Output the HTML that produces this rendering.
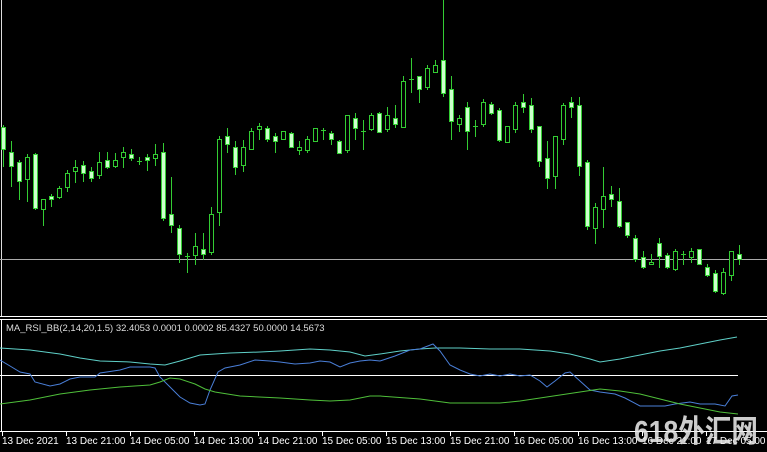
<!DOCTYPE html>
<html><head><meta charset="utf-8"><style>
html,body{margin:0;padding:0;background:#000;width:767px;height:452px;overflow:hidden}
svg{display:block}
.w line{stroke:#3c3;stroke-width:1}
.h{fill:#000;stroke:#3c3;stroke-width:1}
.f{fill:#ccffcc;stroke:#3c3;stroke-width:1}
.lbl{font-family:"Liberation Sans",sans-serif;font-size:10px;fill:#fff}
</style></head><body>
<svg width="767" height="452" viewBox="0 0 767 452" xmlns="http://www.w3.org/2000/svg">
<rect width="767" height="452" fill="#000"/>
<line x1="1.5" y1="0" x2="1.5" y2="316" stroke="#ddd"/>
<line x1="0" y1="259.5" x2="767" y2="259.5" stroke="#aaa"/>
<line x1="0" y1="316.5" x2="767" y2="316.5" stroke="#fff"/>
<line x1="0" y1="319.5" x2="767" y2="319.5" stroke="#fff"/>
<line x1="1.5" y1="320" x2="1.5" y2="432" stroke="#fff"/>
<line x1="0" y1="431.5" x2="767" y2="431.5" stroke="#fff"/>
<g stroke="#fff">
<line x1="2.5" y1="431" x2="2.5" y2="436"/><line x1="66.5" y1="431" x2="66.5" y2="436"/><line x1="130.5" y1="431" x2="130.5" y2="436"/><line x1="194.5" y1="431" x2="194.5" y2="436"/><line x1="258.5" y1="431" x2="258.5" y2="436"/><line x1="322.5" y1="431" x2="322.5" y2="436"/><line x1="386.5" y1="431" x2="386.5" y2="436"/><line x1="450.5" y1="431" x2="450.5" y2="436"/><line x1="514.5" y1="431" x2="514.5" y2="436"/><line x1="578.5" y1="431" x2="578.5" y2="436"/><line x1="642.5" y1="431" x2="642.5" y2="436"/><line x1="706.5" y1="431" x2="706.5" y2="436"/>
</g>
<g class="lbl">
<text x="2" y="444">13 Dec 2021</text><text x="66" y="444">13 Dec 21:00</text><text x="130" y="444">14 Dec 05:00</text><text x="194" y="444">14 Dec 13:00</text><text x="258" y="444">14 Dec 21:00</text><text x="322" y="444">15 Dec 05:00</text><text x="386" y="444">15 Dec 13:00</text><text x="450" y="444">15 Dec 21:00</text><text x="514" y="444">16 Dec 05:00</text><text x="578" y="444">16 Dec 13:00</text><text x="642" y="444">16 Dec 21:00</text><text x="706" y="444">17 Dec 05:00</text>
</g>
<text x="6" y="331" font-family="Liberation Sans,sans-serif" font-size="9.5px" fill="#ddd">MA_RSI_BB(2,14,20,1.5) 32.4053 0.0001 0.0002 85.4327 50.0000 14.5673</text>
<line x1="0" y1="375.5" x2="738" y2="375.5" stroke="#fff"/>
<polyline fill="none" stroke="#5fd0c8" points="0,348 30,350 60,354 80,358 100,361 130,362 150,364 165,365 180,361 200,355 230,353 260,352 280,351 310,349 330,350 350,352 365,356 380,354 400,351 420,349 435,348 460,348 490,349 520,349 550,351 570,354 590,359 600,362 620,359 640,355 660,351 680,348 700,344 720,340 737,337"/>
<polyline fill="none" stroke="#4a7fd8" points="0,360 10,366 20,372 30,374 35,382 50,386 60,384 70,379 80,377 95,377 100,373 120,370 130,367 150,367 155,368 160,377 170,387 180,397 190,403 200,405 205,404 210,390 218,372 225,368 240,365 255,360 270,361 280,362 295,364 310,363 320,361 330,362 340,367 350,363 360,361 370,360 380,361 395,356 410,350 420,349 433,344 440,351 450,365 460,370 470,374 480,376 490,374 500,376 510,374 520,376 530,375 540,381 547,387 555,381 565,373 570,372 580,381 590,390 600,392 615,394 625,398 640,406 660,406 665,406 675,404 690,402 700,404 715,404 725,406 732,396 738,395"/>
<polyline fill="none" stroke="#4fbf3a" points="0,404 30,400 60,394 90,390 120,387 150,385 160,382 170,378 180,379 195,384 205,389 215,392 240,396 280,398 310,400 330,401 350,400 360,398 370,396 380,396 420,399 450,403 470,403 500,403 520,401 540,398 560,395 580,392 600,389 620,391 640,394 660,399 680,404 700,408 720,412 738,414"/>
<g class="w" shape-rendering="crispEdges">
<line x1="3.5" y1="125" x2="3.5" y2="167"/><line x1="11.5" y1="141" x2="11.5" y2="187"/><line x1="19.5" y1="160" x2="19.5" y2="200"/><line x1="27.5" y1="154" x2="27.5" y2="202"/><line x1="35.5" y1="153" x2="35.5" y2="210"/><line x1="43.5" y1="199" x2="43.5" y2="226"/><line x1="51.5" y1="194" x2="51.5" y2="207"/><line x1="59.5" y1="186" x2="59.5" y2="199"/><line x1="67.5" y1="170" x2="67.5" y2="192"/><line x1="75.5" y1="160" x2="75.5" y2="183"/><line x1="83.5" y1="161" x2="83.5" y2="182"/><line x1="91.5" y1="167" x2="91.5" y2="182"/><line x1="99.5" y1="152" x2="99.5" y2="179"/><line x1="107.5" y1="152" x2="107.5" y2="169"/><line x1="115.5" y1="153" x2="115.5" y2="168"/><line x1="123.5" y1="147" x2="123.5" y2="168"/><line x1="131.5" y1="149" x2="131.5" y2="161"/><line x1="139.5" y1="157" x2="139.5" y2="165"/><line x1="147.5" y1="154" x2="147.5" y2="171"/><line x1="155.5" y1="144" x2="155.5" y2="166"/><line x1="163.5" y1="143" x2="163.5" y2="221"/><line x1="171.5" y1="177" x2="171.5" y2="233"/><line x1="179.5" y1="225" x2="179.5" y2="263"/><line x1="187.5" y1="253" x2="187.5" y2="273"/><line x1="195.5" y1="233" x2="195.5" y2="265"/><line x1="203.5" y1="233" x2="203.5" y2="260"/><line x1="211.5" y1="207" x2="211.5" y2="255"/><line x1="219.5" y1="136" x2="219.5" y2="226"/><line x1="227.5" y1="128" x2="227.5" y2="153"/><line x1="235.5" y1="141" x2="235.5" y2="175"/><line x1="243.5" y1="140" x2="243.5" y2="172"/><line x1="251.5" y1="128" x2="251.5" y2="150"/><line x1="259.5" y1="123" x2="259.5" y2="140"/><line x1="267.5" y1="126" x2="267.5" y2="142"/><line x1="275.5" y1="133" x2="275.5" y2="153"/><line x1="283.5" y1="131" x2="283.5" y2="140"/><line x1="291.5" y1="132" x2="291.5" y2="148"/><line x1="299.5" y1="141" x2="299.5" y2="155"/><line x1="307.5" y1="136" x2="307.5" y2="153"/><line x1="315.5" y1="128" x2="315.5" y2="142"/><line x1="323.5" y1="128" x2="323.5" y2="140"/><line x1="331.5" y1="131" x2="331.5" y2="145"/><line x1="339.5" y1="140" x2="339.5" y2="154"/><line x1="347.5" y1="115" x2="347.5" y2="153"/><line x1="355.5" y1="113" x2="355.5" y2="140"/><line x1="363.5" y1="120" x2="363.5" y2="150"/><line x1="371.5" y1="113" x2="371.5" y2="131"/><line x1="379.5" y1="112" x2="379.5" y2="133"/><line x1="387.5" y1="107" x2="387.5" y2="132"/><line x1="395.5" y1="105" x2="395.5" y2="128"/><line x1="403.5" y1="76" x2="403.5" y2="127"/><line x1="411.5" y1="58" x2="411.5" y2="93"/><line x1="419.5" y1="76" x2="419.5" y2="103"/><line x1="427.5" y1="65" x2="427.5" y2="90"/><line x1="435.5" y1="60" x2="435.5" y2="72"/><line x1="443.5" y1="0" x2="443.5" y2="97"/><line x1="451.5" y1="76" x2="451.5" y2="140"/><line x1="459.5" y1="115" x2="459.5" y2="132"/><line x1="467.5" y1="102" x2="467.5" y2="150"/><line x1="475.5" y1="120" x2="475.5" y2="137"/><line x1="483.5" y1="99" x2="483.5" y2="127"/><line x1="491.5" y1="102" x2="491.5" y2="115"/><line x1="499.5" y1="108" x2="499.5" y2="142"/><line x1="507.5" y1="126" x2="507.5" y2="142"/><line x1="515.5" y1="102" x2="515.5" y2="133"/><line x1="523.5" y1="94" x2="523.5" y2="113"/><line x1="531.5" y1="98" x2="531.5" y2="133"/><line x1="539.5" y1="126" x2="539.5" y2="167"/><line x1="547.5" y1="141" x2="547.5" y2="189"/><line x1="555.5" y1="136" x2="555.5" y2="189"/><line x1="563.5" y1="103" x2="563.5" y2="145"/><line x1="571.5" y1="97" x2="571.5" y2="118"/><line x1="579.5" y1="97" x2="579.5" y2="176"/><line x1="587.5" y1="160" x2="587.5" y2="230"/><line x1="595.5" y1="203" x2="595.5" y2="244"/><line x1="603.5" y1="167" x2="603.5" y2="228"/><line x1="611.5" y1="186" x2="611.5" y2="207"/><line x1="619.5" y1="188" x2="619.5" y2="228"/><line x1="627.5" y1="222" x2="627.5" y2="238"/><line x1="635.5" y1="235" x2="635.5" y2="262"/><line x1="643.5" y1="251" x2="643.5" y2="269"/><line x1="651.5" y1="254" x2="651.5" y2="265"/><line x1="659.5" y1="238" x2="659.5" y2="268"/><line x1="667.5" y1="253" x2="667.5" y2="269"/><line x1="675.5" y1="249" x2="675.5" y2="271"/><line x1="683.5" y1="251" x2="683.5" y2="265"/><line x1="691.5" y1="248" x2="691.5" y2="263"/><line x1="699.5" y1="249" x2="699.5" y2="264"/><line x1="707.5" y1="264" x2="707.5" y2="277"/><line x1="715.5" y1="270" x2="715.5" y2="293"/><line x1="723.5" y1="268" x2="723.5" y2="295"/><line x1="731.5" y1="251" x2="731.5" y2="281"/><line x1="739.5" y1="245" x2="739.5" y2="265"/>
<line x1="137" y1="161.5" x2="142" y2="161.5"/><line x1="185" y1="256.5" x2="190" y2="256.5"/><line x1="321" y1="130.5" x2="326" y2="130.5"/><line x1="361" y1="131.5" x2="366" y2="131.5"/><line x1="409" y1="79.5" x2="414" y2="79.5"/><line x1="473" y1="126.5" x2="478" y2="126.5"/><line x1="681" y1="254.5" x2="686" y2="254.5"/>
</g>
<g shape-rendering="crispEdges">
<rect class="f" x="1.5" y="127.5" width="4" height="22"/><rect class="f" x="9.5" y="152.5" width="4" height="14"/><rect class="f" x="17.5" y="162.5" width="4" height="19"/><rect class="h" x="25.5" y="157.5" width="4" height="22"/><rect class="f" x="33.5" y="154.5" width="4" height="54"/><rect class="h" x="41.5" y="199.5" width="4" height="10"/><rect class="f" x="49.5" y="196.5" width="4" height="3"/><rect class="h" x="57.5" y="188.5" width="4" height="9"/><rect class="h" x="65.5" y="173.5" width="4" height="14"/><rect class="h" x="73.5" y="167.5" width="4" height="4"/><rect class="f" x="81.5" y="165.5" width="4" height="8"/><rect class="f" x="89.5" y="171.5" width="4" height="7"/><rect class="h" x="97.5" y="162.5" width="4" height="13"/><rect class="f" x="105.5" y="160.5" width="4" height="7"/><rect class="h" x="113.5" y="160.5" width="4" height="6"/><rect class="h" x="121.5" y="152.5" width="4" height="5"/><rect class="f" x="129.5" y="154.5" width="4" height="4"/><rect class="f" x="145.5" y="157.5" width="4" height="3"/><rect class="h" x="153.5" y="154.5" width="4" height="4"/><rect class="f" x="161.5" y="152.5" width="4" height="66"/><rect class="f" x="169.5" y="214.5" width="4" height="11"/><rect class="f" x="177.5" y="228.5" width="4" height="26"/><rect class="h" x="193.5" y="246.5" width="4" height="9"/><rect class="f" x="201.5" y="249.5" width="4" height="5"/><rect class="h" x="209.5" y="214.5" width="4" height="38"/><rect class="h" x="217.5" y="139.5" width="4" height="73"/><rect class="f" x="225.5" y="136.5" width="4" height="8"/><rect class="f" x="233.5" y="147.5" width="4" height="20"/><rect class="h" x="241.5" y="147.5" width="4" height="18"/><rect class="h" x="249.5" y="131.5" width="4" height="18"/><rect class="h" x="257.5" y="126.5" width="4" height="3"/><rect class="f" x="265.5" y="128.5" width="4" height="11"/><rect class="f" x="273.5" y="136.5" width="4" height="5"/><rect class="h" x="281.5" y="131.5" width="4" height="8"/><rect class="f" x="289.5" y="133.5" width="4" height="14"/><rect class="h" x="297.5" y="147.5" width="4" height="3"/><rect class="h" x="305.5" y="139.5" width="4" height="11"/><rect class="h" x="313.5" y="128.5" width="4" height="13"/><rect class="f" x="329.5" y="133.5" width="4" height="6"/><rect class="f" x="337.5" y="141.5" width="4" height="12"/><rect class="h" x="345.5" y="115.5" width="4" height="35"/><rect class="f" x="353.5" y="118.5" width="4" height="10"/><rect class="h" x="369.5" y="115.5" width="4" height="14"/><rect class="f" x="377.5" y="113.5" width="4" height="19"/><rect class="h" x="385.5" y="115.5" width="4" height="14"/><rect class="f" x="393.5" y="118.5" width="4" height="6"/><rect class="h" x="401.5" y="81.5" width="4" height="46"/><rect class="f" x="417.5" y="76.5" width="4" height="13"/><rect class="h" x="425.5" y="68.5" width="4" height="19"/><rect class="h" x="433.5" y="65.5" width="4" height="7"/><rect class="f" x="441.5" y="60.5" width="4" height="33"/><rect class="f" x="449.5" y="89.5" width="4" height="32"/><rect class="h" x="457.5" y="118.5" width="4" height="6"/><rect class="f" x="465.5" y="107.5" width="4" height="24"/><rect class="h" x="481.5" y="102.5" width="4" height="22"/><rect class="f" x="489.5" y="104.5" width="4" height="9"/><rect class="f" x="497.5" y="110.5" width="4" height="30"/><rect class="h" x="505.5" y="126.5" width="4" height="16"/><rect class="h" x="513.5" y="105.5" width="4" height="24"/><rect class="f" x="521.5" y="102.5" width="4" height="5"/><rect class="f" x="529.5" y="105.5" width="4" height="24"/><rect class="f" x="537.5" y="126.5" width="4" height="35"/><rect class="f" x="545.5" y="158.5" width="4" height="20"/><rect class="h" x="553.5" y="136.5" width="4" height="40"/><rect class="h" x="561.5" y="105.5" width="4" height="34"/><rect class="f" x="569.5" y="102.5" width="4" height="5"/><rect class="f" x="577.5" y="105.5" width="4" height="61"/><rect class="f" x="585.5" y="162.5" width="4" height="64"/><rect class="h" x="593.5" y="207.5" width="4" height="21"/><rect class="h" x="601.5" y="196.5" width="4" height="13"/><rect class="f" x="609.5" y="194.5" width="4" height="5"/><rect class="f" x="617.5" y="201.5" width="4" height="25"/><rect class="f" x="625.5" y="222.5" width="4" height="13"/><rect class="f" x="633.5" y="238.5" width="4" height="21"/><rect class="f" x="641.5" y="257.5" width="4" height="10"/><rect class="h" x="649.5" y="262.5" width="4" height="2"/><rect class="f" x="657.5" y="243.5" width="4" height="13"/><rect class="f" x="665.5" y="255.5" width="4" height="12"/><rect class="h" x="673.5" y="251.5" width="4" height="18"/><rect class="h" x="689.5" y="251.5" width="4" height="6"/><rect class="f" x="697.5" y="249.5" width="4" height="15"/><rect class="f" x="705.5" y="267.5" width="4" height="8"/><rect class="f" x="713.5" y="273.5" width="4" height="18"/><rect class="h" x="721.5" y="272.5" width="4" height="21"/><rect class="h" x="729.5" y="251.5" width="4" height="24"/><rect class="f" x="737.5" y="254.5" width="4" height="5"/>
</g>
<text x="634" y="442" font-family="Liberation Sans,'Noto Sans CJK SC',sans-serif" font-weight="bold" font-size="31px" fill="#e8e8e8" fill-opacity="0.88" textLength="124" lengthAdjust="spacingAndGlyphs">618外汇网</text>
</svg>
</body></html>
